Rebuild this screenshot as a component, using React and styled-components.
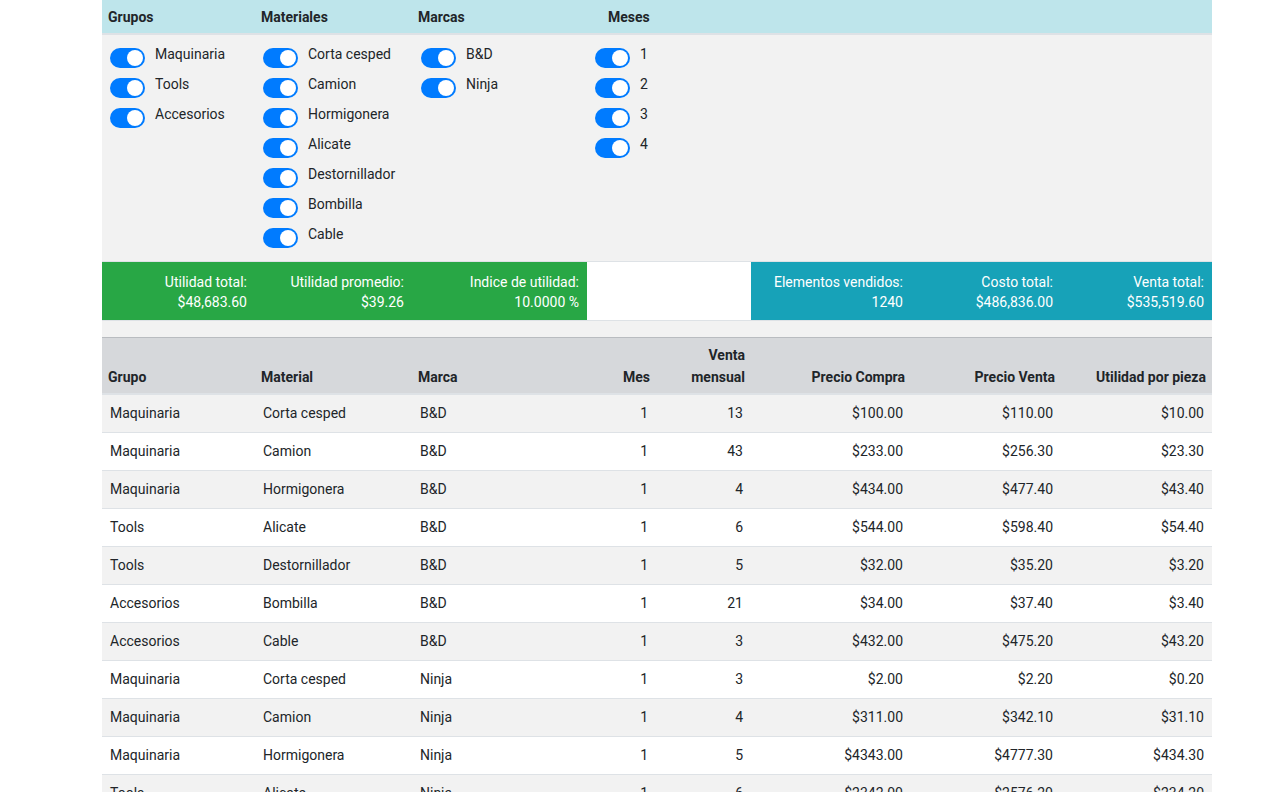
import React from 'react';
import styled, { createGlobalStyle } from 'styled-components';

const GlobalStyle = createGlobalStyle`
  html, body {
    margin: 0;
    padding: 0;
    overflow: hidden;
    background: #fff;
  }
  body {
    font-family: Roboto, "Liberation Sans", Arial, sans-serif;
    font-size: 14px;
    color: #212529;
  }
`;

const COLS = '153px 157px 175px 69px 95px 160px 150px 151px';

const Page = styled.div`
  width: 1110px;
  margin-left: 102px;
`;

const FilterHead = styled.div`
  display: grid;
  grid-template-columns: ${COLS};
  height: 33px;
  background: #bee5eb;
  border-bottom: 2px solid #dee2e6;
`;

const HeadCell = styled.div`
  display: flex;
  align-items: center;
  padding-left: ${(p) => p.$indent || 6}px;
  font-weight: 700;
  grid-column: span ${(p) => p.$span || 1};
`;

const FilterBody = styled.div`
  display: grid;
  grid-template-columns: ${COLS};
  background: #f2f2f2;
  padding: 9px 0 7px;
`;

const SwitchList = styled.div`
  display: flex;
  flex-direction: column;
  padding-left: ${(p) => p.$indent || 8}px;
`;

const SwitchRow = styled.label`
  display: flex;
  align-items: flex-start;
  height: 30px;
  gap: 10px;
  line-height: 20px;
  white-space: nowrap;
`;

const Track = styled.span`
  position: relative;
  flex: none;
  width: 35px;
  height: 20px;
  margin-top: 4px;
  border-radius: 10px;
  background: #007bff;
`;

const Knob = styled.span`
  position: absolute;
  top: 2px;
  right: 2px;
  width: 16px;
  height: 16px;
  border-radius: 50%;
  background: #fff;
`;

const StatsRow = styled.div`
  display: grid;
  grid-template-columns: ${COLS};
  border-top: 1px solid #dee2e6;
  border-bottom: 1px solid #dee2e6;
`;

const StatCell = styled.div`
  grid-column: span ${(p) => p.$span || 1};
  background: ${(p) => p.$bg};
  color: #fff;
  text-align: right;
  padding: 10px 8px 8px;
  line-height: 20px;
`;

const Spacer = styled.div`
  height: 16px;
  background: #f2f2f2;
`;

const Table = styled.table`
  width: 1110px;
  border-collapse: collapse;
  table-layout: fixed;
`;

const Th = styled.th`
  background: #d6d8db;
  border-top: 1px solid #b9bcc0;
  border-bottom: 2px solid #dee2e6;
  padding: 6px 6px 5px;
  line-height: 22px;
  vertical-align: bottom;
  font-weight: 700;
  text-align: ${(p) => (p.$right ? 'right' : 'left')};
`;

const Tr = styled.tr`
  background: ${(p) => (p.$striped ? '#f2f2f2' : '#fff')};
`;

const Td = styled.td`
  border-top: 1px solid #dee2e6;
  padding: 8px;
  line-height: 21px;
  white-space: nowrap;
  text-align: ${(p) => (p.$right ? 'right' : 'left')};
`;

function Switch({ label }) {
  return (
    <SwitchRow>
      <Track>
        <Knob />
      </Track>
      <span>{label}</span>
    </SwitchRow>
  );
}

const grupos = ['Maquinaria', 'Tools', 'Accesorios'];
const materiales = ['Corta cesped', 'Camion', 'Hormigonera', 'Alicate', 'Destornillador', 'Bombilla', 'Cable'];
const marcas = ['B&D', 'Ninja'];
const meses = ['1', '2', '3', '4'];

const rows = [
  ['Maquinaria', 'Corta cesped', 'B&D', 1, 13, '$100.00', '$110.00', '$10.00'],
  ['Maquinaria', 'Camion', 'B&D', 1, 43, '$233.00', '$256.30', '$23.30'],
  ['Maquinaria', 'Hormigonera', 'B&D', 1, 4, '$434.00', '$477.40', '$43.40'],
  ['Tools', 'Alicate', 'B&D', 1, 6, '$544.00', '$598.40', '$54.40'],
  ['Tools', 'Destornillador', 'B&D', 1, 5, '$32.00', '$35.20', '$3.20'],
  ['Accesorios', 'Bombilla', 'B&D', 1, 21, '$34.00', '$37.40', '$3.40'],
  ['Accesorios', 'Cable', 'B&D', 1, 3, '$432.00', '$475.20', '$43.20'],
  ['Maquinaria', 'Corta cesped', 'Ninja', 1, 3, '$2.00', '$2.20', '$0.20'],
  ['Maquinaria', 'Camion', 'Ninja', 1, 4, '$311.00', '$342.10', '$31.10'],
  ['Maquinaria', 'Hormigonera', 'Ninja', 1, 5, '$4343.00', '$4777.30', '$434.30'],
  ['Tools', 'Alicate', 'Ninja', 1, 6, '$2342.00', '$2576.20', '$234.20'],
];

const widths = [153, 157, 175, 69, 95, 160, 150, 151];

export default function App() {
  return (
    <Page>
      <GlobalStyle />
      <FilterHead>
        <HeadCell>Grupos</HeadCell>
        <HeadCell>Materiales</HeadCell>
        <HeadCell>Marcas</HeadCell>
        <HeadCell $indent={21} $span={5}>Meses</HeadCell>
      </FilterHead>
      <FilterBody>
        <SwitchList>{grupos.map((g) => <Switch key={g} label={g} />)}</SwitchList>
        <SwitchList>{materiales.map((m) => <Switch key={m} label={m} />)}</SwitchList>
        <SwitchList $indent={9}>{marcas.map((m) => <Switch key={m} label={m} />)}</SwitchList>
        <SwitchList>{meses.map((m) => <Switch key={m} label={m} />)}</SwitchList>
      </FilterBody>
      <StatsRow>
        <StatCell $bg="#28a745">Utilidad total:<br />$48,683.60</StatCell>
        <StatCell $bg="#28a745">Utilidad promedio:<br />$39.26</StatCell>
        <StatCell $bg="#28a745">Indice de utilidad:<br />10.0000 %</StatCell>
        <StatCell $bg="#fff" $span={2} />
        <StatCell $bg="#17a2b8">Elementos vendidos:<br />1240</StatCell>
        <StatCell $bg="#17a2b8">Costo total:<br />$486,836.00</StatCell>
        <StatCell $bg="#17a2b8">Venta total:<br />$535,519.60</StatCell>
      </StatsRow>
      <Spacer />
      <Table>
        <colgroup>
          {widths.map((w, i) => <col key={i} style={{ width: w }} />)}
        </colgroup>
        <thead>
          <tr>
            <Th>Grupo</Th>
            <Th>Material</Th>
            <Th>Marca</Th>
            <Th $right>Mes</Th>
            <Th $right>Venta<br />mensual</Th>
            <Th $right>Precio Compra</Th>
            <Th $right>Precio Venta</Th>
            <Th $right>Utilidad por pieza</Th>
          </tr>
        </thead>
        <tbody>
          {rows.map((r, i) => (
            <Tr key={i} $striped={i % 2 === 0}>
              {r.map((c, j) => (
                <Td key={j} $right={j > 2}>{c}</Td>
              ))}
            </Tr>
          ))}
        </tbody>
      </Table>
    </Page>
  );
}
